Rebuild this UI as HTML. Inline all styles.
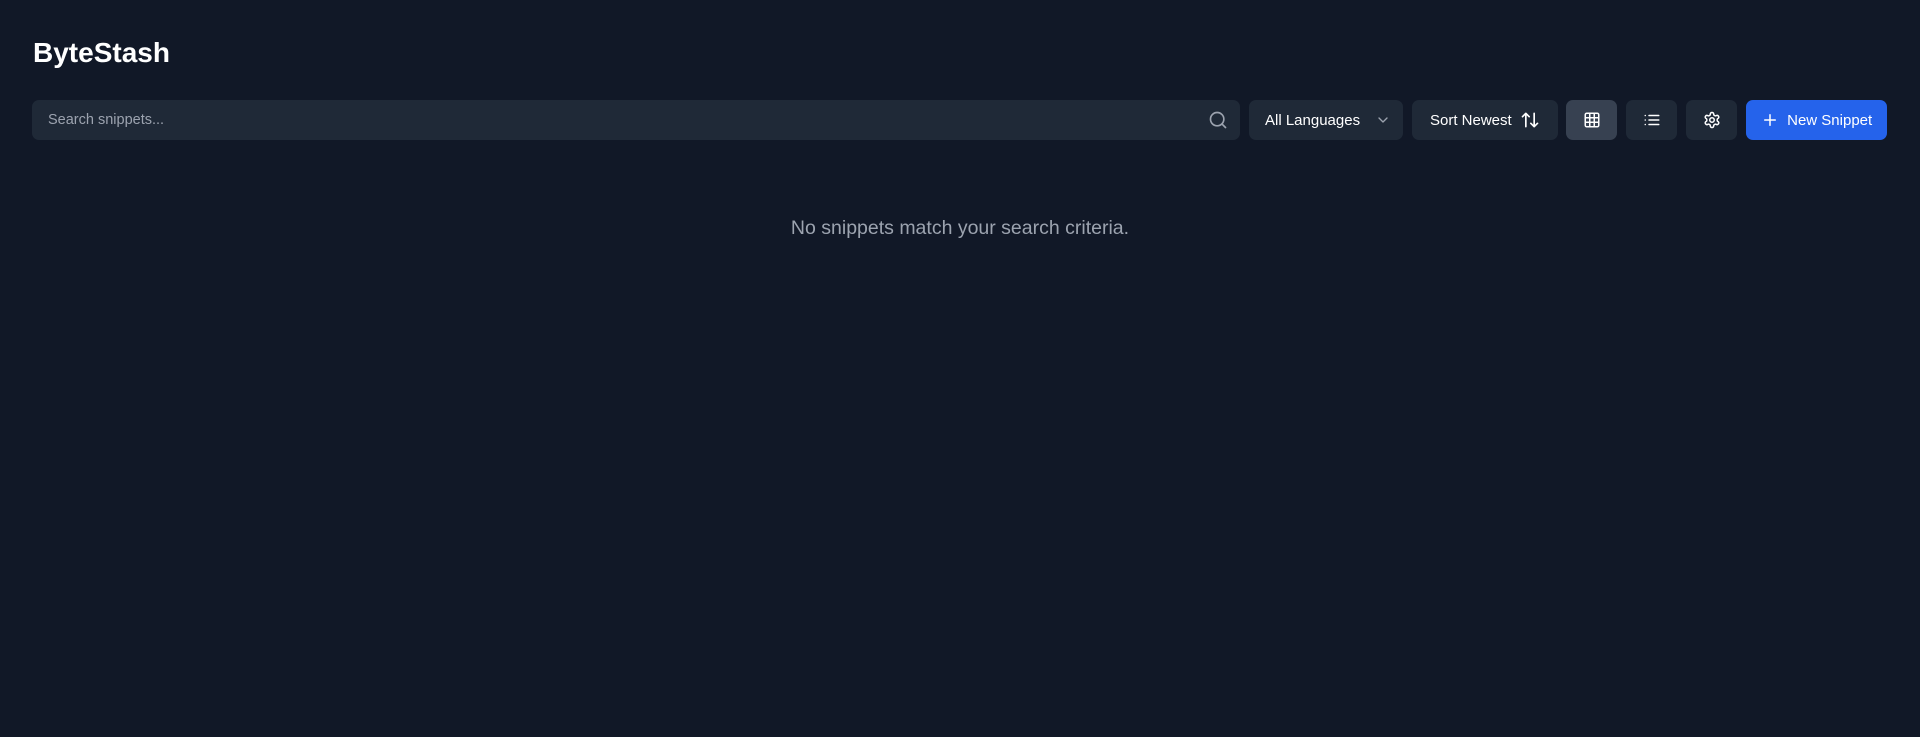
<!DOCTYPE html>
<html><head><meta charset="utf-8"><style>
*{box-sizing:border-box;margin:0;padding:0}
body{width:1920px;height:737px;background:#111827;font-family:"Liberation Sans",sans-serif;color:#fff;position:relative;overflow:hidden}
h1{position:absolute;left:33px;top:37px;font-size:28px;font-weight:bold;color:#fff;letter-spacing:0}
.b{position:absolute;top:100px;height:40px;border-radius:7px;background:#1f2937;display:flex;align-items:center;justify-content:center;font-size:15px;color:#fff}
.search{left:32px;width:1208px;justify-content:flex-start;padding-left:16px;color:#9ca3af;font-size:14.5px}
svg{fill:none;stroke:currentColor;stroke-width:2;stroke-linecap:round;stroke-linejoin:round}
.msg{position:absolute;top:217px;left:0;width:1920px;text-align:center;color:#9ca3af;font-size:19.5px}
</style></head><body>
<h1>ByteStash</h1>
<div class="b search">Search snippets...
<svg style="position:absolute;right:12px;color:#9ca3af" width="20" height="20" viewBox="0 0 24 24"><circle cx="11" cy="11" r="8"/><path d="m21 21-4.3-4.3"/></svg></div>
<div class="b" style="left:1249px;width:154px;justify-content:flex-start;padding-left:16px">All Languages
<svg style="position:absolute;right:12px;color:#9ca3af" width="16" height="16" viewBox="0 0 24 24"><path d="m6 9 6 6 6-6"/></svg></div>
<div class="b" style="left:1412px;width:146px">Sort Newest&nbsp;&nbsp;<svg width="20" height="20" viewBox="0 0 24 24"><path d="m21 16-4 4-4-4M17 20V4M3 8l4-4 4 4M7 4v16"/></svg></div>
<div class="b" style="left:1566px;width:51px;background:#374151"><svg width="18" height="18" viewBox="0 0 24 24"><rect x="3" y="3" width="18" height="18" rx="2"/><path d="M3 9h18M3 15h18M9 3v18M15 3v18"/></svg></div>
<div class="b" style="left:1626px;width:51px"><svg width="18" height="18" viewBox="0 0 24 24"><path d="M3 6h.01M3 12h.01M3 18h.01M8 6h13M8 12h13M8 18h13"/></svg></div>
<div class="b" style="left:1686px;width:51px"><svg width="18" height="18" viewBox="0 0 24 24"><path d="M12.22 2h-.44a2 2 0 0 0-2 2v.18a2 2 0 0 1-1 1.73l-.43.25a2 2 0 0 1-2 0l-.15-.08a2 2 0 0 0-2.730.73l-.22.38a2 2 0 0 0 .73 2.73l.15.1a2 2 0 0 1 1 1.72v.51a2 2 0 0 1-1 1.740l-.15.09a2 2 0 0 0-.73 2.73l.22.38a2 2 0 0 0 2.73.73l.15-.08a2 2 0 0 1 2 0l.43.25a2 2 0 0 1 1 1.73V20a2 2 0 0 0 2 2h.44a2 2 0 0 0 2-2v-.18a2 2 0 0 1 1-1.73l.43-.25a2 2 0 0 1 2 0l.15.08a2 2 0 0 0 2.73-.73l.22-.39a2 2 0 0 0-.73-2.73l-.15-.08a2 2 0 0 1-1-1.74v-.5a2 2 0 0 1 1-1.74l.15-.09a2 2 0 0 0 .73-2.73l-.22-.38a2 2 0 0 0-2.73-.73l-.15.08a2 2 0 0 1-2 0l-.43-.25a2 2 0 0 1-1-1.73V4a2 2 0 0 0-2-2z"/><circle cx="12" cy="12" r="3"/></svg></div>
<div class="b" style="left:1746px;width:141px;background:#2563eb"><svg width="18" height="18" viewBox="0 0 24 24"><path d="M5 12h14M12 5v14"/></svg>&nbsp;&nbsp;New Snippet</div>
<div class="msg">No snippets match your search criteria.</div>
</body></html>
